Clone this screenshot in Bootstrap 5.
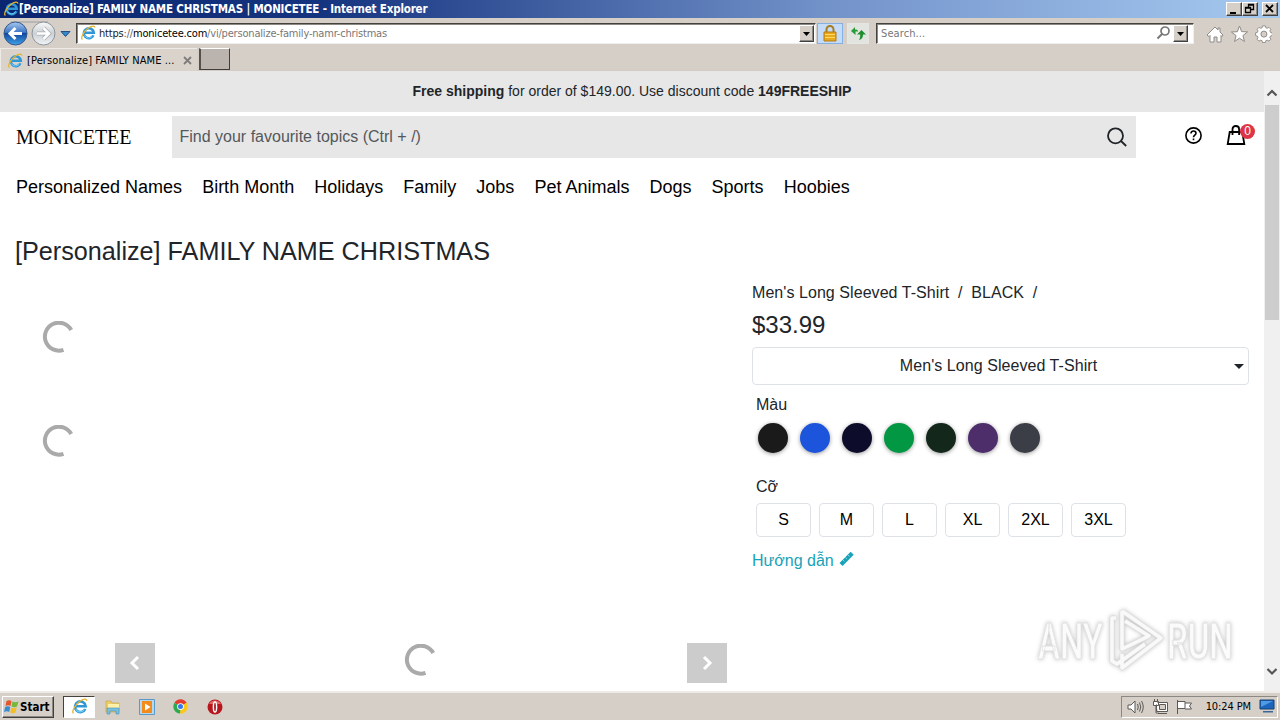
<!DOCTYPE html>
<html lang="vi">
<head>
    <meta charset="UTF-8">
    <meta name="viewport" content="width=device-width, initial-scale=1.0">
    <title>[Personalize] FAMILY NAME CHRISTMAS | MONICETEE</title>
    <link href="https://cdn.jsdelivr.net/npm/bootstrap@5.3.3/dist/css/bootstrap.min.css" rel="stylesheet">
    <style>
        body { width: 1280px; height: 720px; overflow: hidden; font-family: "Liberation Sans", Arial, sans-serif; color: #212529; }
        svg { display: block; flex: none; }

        /* browser window */
        .chrome-ui { font-family: "DejaVu Sans Condensed", "DejaVu Sans", sans-serif; font-size: 11px; line-height: 14px; color: #000; white-space: nowrap; background: #d5cfc8; }
        .title-bar { height: 18px; padding: 0 2px 0 3px; background: linear-gradient(90deg, #0b2670 0%, #15347f 25%, #7191c9 64%, #a6caf0 100%); }
        .title-text { color: #fff; font-weight: bold; font-size: 11.5px; letter-spacing: -.18px; }
        .win-btn, .drop-btn { background: #d5cfc8; border: 1px solid; border-color: #fff #404040 #404040 #fff; box-shadow: inset -1px -1px #8c8883; }
        .win-btn { width: 16px; height: 14px; }
        .tool-row { height: 30px; padding-left: 1px; }
        .sunken { background: #fff; border: 1px solid; border-color: #45413d #eee #eee #45413d; box-shadow: inset 1px 1px #8c8883; }
        .address { width: 740px; height: 21px; margin-left: 5px; padding: 1px 1px 1px 3px; }
        .url-text { letter-spacing: -.19px; padding-top: 2px; }
        .drop-btn { width: 15px; height: 17px; }
        .tool-btn { border: 1px solid #e5e5e3; background: #e2e4df; width: 22px; height: 21px; }
        .lock-btn { width: 26px; border-color: #85b0e4; background: #c5dcf8; }
        .search-ie { width: 318px; height: 21px; margin-left: 7px; padding: 1px 5px 1px 4px; color: #777; }
        .tab-row { height: 23px; border-bottom: 1px solid #d4cbc5; }
        .tab-item { width: 197px; height: 23px; padding: 1px 5px 0 6px; border-top: 1px solid #eeeae6; border-left: 1px solid #eeeae6; background: #d9d3cc; }
        .new-tab { width: 31px; height: 22px; margin-left: 2px; background: #bbb3ae; border: 1px solid; border-color: #fff #403c39 #403c39 #fff; border-left: 2px solid #55504b; }

        /* page viewport */
        .viewport-area { height: 620px; background: #fff; }
        .page-area { width: 1264px; }
        .promo { height: 41px; background: #e7e7e7; font-size: 14px; line-height: 41px; }
        .shop-head { height: 50px; padding: 4px 0 0 16px; color: #000; }
        .brand-name { width: 156px; font: 20px/42px "Liberation Serif", "Times New Roman", serif; }
        .topic-search { width: 964px; height: 42px; background: #e7e7e7; padding: 0 9px 0 7.5px; color: #54585c; }
        .cart { margin-left: 24px; width: 30px; }
        .cart-count { position: absolute; left: 14px; top: -1px; width: 15px; height: 15px; border-radius: 50%; background: #dc3545; color: #fff; font-size: 12px; line-height: 15px; text-align: center; }
        .topic-nav { height: 50px; padding: 0 16px; gap: 20.05px; font-size: 18px; color: #000; white-space: nowrap; }
        .product-title { font-size: 25.2px; line-height: 32px; font-weight: 400; margin: 23px 0 0 15px; }
        .gallery { width: 737px; height: 415px; margin-top: 9px; }
        .thumb-list { width: 115px; padding: 45px 0 0 42px; gap: 72px; }
        .main-shot { width: 612px; height: 407px; }
        .slide-btn { width: 40px; height: 40px; background: #ccc; }
        .options { width: 512px; padding: 14px 0 0 15px; }
        .style-name { letter-spacing: .06px; }
        .style-name i { font-style: normal; margin: 0 8.7px; }
        .price { font-size: 24px; line-height: 30px; margin-top: 5px; }
        .style-select { width: 497px; height: 38px; margin-top: 7px; border: 1px solid #dee2e6; border-radius: 4px; padding: 0 4px 0 10px; background: #fff; }
        .caret { border: 5px solid transparent; border-top-color: #212529; border-bottom: 0; }
        .swatch { width: 30px; height: 30px; border-radius: 50%; box-shadow: 0 1px 4px rgba(0, 0, 0, .4); }
        .size-btn { width: 55px; height: 34px; border: 1px solid #dee2e6; border-radius: 4px; color: #000; background: #fff; line-height: 32px; padding: 0; text-align: center; }
        .guide { color: #17a2b8; line-height: 24px; margin-top: 12px; }
        .scroll-col { width: 16px; background: #f0f0f0; padding: 17px 1px 15px; }
        .scroll-thumb { width: 14px; height: 215px; background: #cdcdcd; }
        .watermark { position: absolute; left: 1030px; top: 600px; }

        /* taskbar */
        .task-bar { height: 29px; border-top: 2px solid #eeebe7; padding: 2px 2px 2px 2px; }
        .start-btn { width: 52px; height: 22px; border: 1px solid; border-color: #fff #404040 #404040 #fff; box-shadow: inset -1px -1px #8c8883; font-weight: bold; font-size: 11.5px; padding-left: 1px; }
        .active-task { width: 32px; height: 22px; margin-left: 9px; background: #fff; border: 1px solid; border-color: #45413d #fff #fff #45413d; }
        .tray { width: 157px; height: 22px; border: 1px solid; border-color: #8c8883 #fff #fff #8c8883; padding: 0 2px 0 5px; font-size: 11px; }
    </style>
</head>
<body>
    <!-- shared icons -->
    <svg width="0" height="0" class="position-absolute">
        <symbol id="ie" viewBox="0 0 16 16">
            <path d="M13.400 10.300a5 5 0 1 1 .4-2.500H5" fill="none" stroke="#2f97d8" stroke-width="2.500"/>
            <path d="M12.500 10.800a4.600 4.600 0 0 1-8-.2" fill="none" stroke="#75cdf2" stroke-width="1"/>
            <path d="M2.400 14.500C.1 13 4.200 5.700 8.700 2.800c3.100-2.100 6.300-2.500 6-.1" fill="none" stroke="#e6b52d" stroke-width="1.300"/>
        </symbol>
        <symbol id="ring" viewBox="0 0 32 32">
            <path d="M29.200 9A14 14 0 1 0 21.500 28.900" fill="none" stroke="#aaa" stroke-width="4"/>
        </symbol>
    </svg>

    <div class="chrome-ui">
        <div class="title-bar d-flex align-items-center">
            <svg width="16" height="16"><use href="#ie"/></svg>
            <span class="title-text me-auto">[Personalize] FAMILY NAME CHRISTMAS | MONICETEE - Internet Explorer</span>
            <div class="win-btn"><svg width="14" height="12"><path d="M3 9h6v2H3z"/></svg></div>
            <div class="win-btn"><svg width="14" height="12"><path d="M5.500 4V1.500h5v5H8M2.500 4.500h5v5h-5zM5 2h6M2 5h6" fill="none" stroke="#000" stroke-width="1.300"/></svg></div>
            <div class="win-btn ms-1"><svg width="14" height="12"><path d="M3 2l7 7M10 2l-7 7" stroke="#000" stroke-width="1.800"/></svg></div>
        </div>
        <div class="tool-row d-flex align-items-center">
            <svg width="70" height="30" viewBox="0 0 70 30">
                <defs>
                    <linearGradient id="backFill" x2="0" y2="1"><stop stop-color="#a9c9ee"/><stop offset=".45" stop-color="#3c76c5"/><stop offset=".5" stop-color="#11489f"/><stop offset="1" stop-color="#42a2e8"/></linearGradient>
                    <linearGradient id="fwdFill" x2="0" y2="1"><stop stop-color="#fafafa"/><stop offset=".5" stop-color="#ccd0d5"/><stop offset="1" stop-color="#f1f4f7"/></linearGradient>
                </defs>
                <path d="M10 4h37" stroke="#9b9fa5"/>
                <circle cx="14.500" cy="15.500" r="11.500" fill="url(#backFill)" stroke="#35588c"/>
                <circle cx="42.500" cy="15.500" r="11.500" fill="url(#fwdFill)" stroke="#8b949c"/>
                <path d="M21 15.500H9m5.500-5.500L9 15.500l5.500 5.500" fill="none" stroke="#fff" stroke-width="3"/>
                <path d="M36 15.500h12m-5.500-5.500l5.500 5.500-5.500 5.500" fill="none" stroke="#a8adb2" stroke-width="4"/>
                <path d="M36 15.500h12m-5.500-5.500l5.500 5.500-5.500 5.500" fill="none" stroke="#fff" stroke-width="2.500"/>
                <path d="M60 13.500h9l-4.500 5z" fill="#338ac8" stroke="#24508a"/>
            </svg>
            <div class="address sunken d-flex align-items-center">
                <svg width="16" height="16"><use href="#ie"/></svg>
                <span class="url-text me-auto" style="margin-left:3px"><span style="color:#222">https</span><span style="color:#666">://</span>monicetee.com<span style="color:#777">/vi/personalize-family-namr-christmas</span></span>
                <div class="drop-btn"><svg width="13" height="15"><path d="M3 6h7l-3.500 4z"/></svg></div>
            </div>
            <div class="tool-btn lock-btn d-flex justify-content-center align-items-center" style="margin-left:1px">
                <svg width="14" height="17" viewBox="0 0 14 17"><path d="M3.500 8V4.500a3.500 3.500 0 0 1 7 0V8" fill="none" stroke="#a87c22" stroke-width="2"/><path d="M1 7h12v9H1z" fill="#e8a91c" stroke="#b47a10"/><path d="M2 9.500h10M2 12.500h10" stroke="#ffd866"/></svg>
            </div>
            <div class="tool-btn d-flex justify-content-center align-items-center" style="margin-left:4px">
                <svg width="16" height="16" viewBox="0 0 16 16"><path d="M1 6L5 2v2.500c2 0 3 .5 3 2H5.500v3.500z" fill="#299c39"/><path d="M7 9.500L11.500 5 16 9.500h-3c0 3-1 4.500-4 5.500 1-1.500 1.300-3 1.200-5.500z" fill="#1d8e2e"/></svg>
            </div>
            <div class="search-ie sunken d-flex align-items-center">
                <span class="me-auto" style="padding-top:2px;letter-spacing:.1px">Search...</span>
                <svg width="15" height="16" viewBox="0 0 15 16"><circle cx="9" cy="6" r="4" fill="none" stroke="#777" stroke-width="1.700"/><path d="M6 9l-4.500 4.500" stroke="#777" stroke-width="2"/></svg>
                <div class="drop-btn" style="margin-left:2px"><svg width="13" height="15"><path d="M3 6h7l-3.500 4z"/></svg></div>
            </div>
            <svg class="ms-auto me-2" width="66" height="20" viewBox="0 0 66 20" fill="#fff" stroke="#908b87">
                <g transform="translate(0 1)">
                    <path d="M1 11l8-8 3 3V4h2v4l3 3-1 1.500-1-1V18h-4v-5H8v5H4v-6.500l-1 1z"/>
                    <path d="M33.500 2l2.100 5.600 6 .3-4.700 3.700 1.600 5.900-5-3.300-5 3.300 1.600-5.900L25.400 8l6-.3z"/>
                    <path d="M56.500 2h3l.5 2 1.500.6 1.900-1 2 2-1 1.900.6 1.500 2 .5v3l-2 .5-.6 1.500 1 1.900-2 2-1.900-1-1.500.6-.5 2h-3l-.5-2-1.500-.6-1.900 1-2-2 1-1.900-.6-1.500-2-.5v-3l2-.5.6-1.500-1-1.900 2-2 1.900 1L56 4z" transform="translate(4 0) scale(.93)"/>
                    <circle cx="57.900" cy="10.100" r="3" fill="#d5cfc8"/>
                </g>
            </svg>
        </div>
        <div class="tab-row d-flex">
            <div class="tab-item d-flex align-items-center">
                <svg width="16" height="16"><use href="#ie"/></svg>
                <span class="me-auto" style="margin-left:4px;letter-spacing:.1px">[Personalize] FAMILY NAME ...</span>
                <svg width="9" height="9"><path d="M1 1l7 7M8 1L1 8" stroke="#817c79" stroke-width="1.800"/></svg>
            </div>
            <div class="new-tab"></div>
        </div>
    </div>

    <div class="viewport-area d-flex">
        <main class="page-area">
            <div class="promo text-center"><b>Free shipping</b> for order of $149.00. Use discount code <b>149FREESHIP</b></div>
            <header class="shop-head d-flex">
                <div class="brand-name">MONICETEE</div>
                <div class="topic-search d-flex align-items-center justify-content-between">
                    <span>Find your favourite topics (Ctrl + /)</span>
                    <svg width="20" height="20" viewBox="0 0 20 20" fill="none" stroke="#212529" stroke-width="1.800"><circle cx="8.500" cy="8.800" r="7.500"/><path d="M14 14l5.200 5"/></svg>
                </div>
                <svg style="margin:11px 0 0 49px" width="17" height="17" viewBox="0 0 17 17" fill="none" stroke="#000" stroke-width="1.600"><circle cx="8.500" cy="8.500" r="7.600"/><path d="M6 6.500C6 3 11 3.300 11 6.300c0 1.900-2.500 1.900-2.500 4"/><path d="M8.500 11.500v1.700"/></svg>
                <div class="cart position-relative" style="margin-top:9px">
                    <svg width="20" height="20" viewBox="0 0 20 20" fill="none" stroke="#000" stroke-width="1.800"><path d="M3.700 7h12.600l2 12H1.700z"/><path d="M6.500 10V4.200Q6.500 1 9.800 1t3.300 3.200V10" stroke-width="1.800"/></svg>
                    <span class="cart-count">0</span>
                </div>
            </header>
            <nav class="topic-nav d-flex align-items-center">
                <span>Personalized Names</span><span>Birth Month</span><span>Holidays</span><span>Family</span><span>Jobs</span><span>Pet Animals</span><span>Dogs</span><span>Sports</span><span>Hoobies</span>
            </nav>
            <h1 class="product-title">[Personalize] FAMILY NAME CHRISTMAS</h1>
            <div class="d-flex">
                <section class="gallery d-flex">
                    <div class="thumb-list d-flex flex-column">
                        <svg width="32" height="32"><use href="#ring"/></svg>
                        <svg width="32" height="32"><use href="#ring"/></svg>
                    </div>
                    <div class="main-shot d-flex justify-content-between align-items-end">
                        <div class="slide-btn d-flex align-items-center justify-content-center"><svg width="14" height="16"><path d="M10 2L4 8l6 6" fill="none" stroke="#fff" stroke-width="3"/></svg></div>
                        <svg width="32" height="32" style="margin:0 2px 7px 0"><use href="#ring"/></svg>
                        <div class="slide-btn d-flex align-items-center justify-content-center"><svg width="14" height="16"><path d="M4 2l6 6-6 6" fill="none" stroke="#fff" stroke-width="3"/></svg></div>
                    </div>
                </section>
                <section class="options">
                    <div class="style-name">Men's Long Sleeved T-Shirt<i>/</i>BLACK<i>/</i></div>
                    <div class="price">$33.99</div>
                    <div class="style-select d-flex align-items-center">
                        <span class="flex-grow-1 text-center style-name">Men's Long Sleeved T-Shirt</span>
                        <span class="caret"></span>
                    </div>
                    <div class="ms-1" style="margin-top:8px">Màu</div>
                    <div class="d-flex" id="swatches" style="gap:12px;margin:6px 0 0 6px"></div>
                    <div class="ms-1" style="margin-top:22px">Cỡ</div>
                    <div class="d-flex gap-2 ms-1" style="margin-top:4px">
                        <button class="size-btn">S</button>
                        <button class="size-btn">M</button>
                        <button class="size-btn">L</button>
                        <button class="size-btn">XL</button>
                        <button class="size-btn">2XL</button>
                        <button class="size-btn">3XL</button>
                    </div>
                    <div class="guide d-flex">Hướng dẫn
                        <svg style="margin:2px 0 0 5px" width="16" height="16" viewBox="0 0 16 16"><path d="M.5 12L11.700.8l3 3L3.500 15z" fill="#17a2b8"/><path d="M4 9l1.500 1.500M6.500 6.500L8 8M9 4l1.500 1.500" stroke="#fff" stroke-width=".8" opacity=".6"/></svg>
                    </div>
                </section>
            </div>
        </main>
        <div class="scroll-col d-flex flex-column align-items-center">
            <svg width="12" height="9" class="mb-2"><path d="M1.500 7.500L6 3l4.500 4.500" fill="none" stroke="#555" stroke-width="2.200"/></svg>
            <div class="scroll-thumb"></div>
            <svg width="12" height="9" class="mt-auto"><path d="M1.500 2L6 6.500 10.500 2" fill="none" stroke="#555" stroke-width="2.200"/></svg>
        </div>
    </div>

    <!-- translucent recorder logo over the page -->
    <svg class="watermark" width="250" height="90" viewBox="0 0 250 90" style="filter:drop-shadow(0 0 2px rgba(0,0,0,.25))">
        <g fill="#fbfbfb" stroke="#e2e2e2" stroke-width=".8" font-family="Roboto, sans-serif" font-weight="500" font-size="50">
            <text transform="translate(8 59) scale(.66 1)">ANY</text>
            <text transform="translate(137 59) scale(.66 1)">RUN</text>
        </g>
        <g fill="none" stroke-linejoin="round">
            <path d="M92 11l39 27-39 30V54M92 11v38l27-13-24-15M86 18h-4v43l5 3 28-20" stroke="#dedede" stroke-width="5"/>
            <path d="M92 11l39 27-39 30V54M92 11v38l27-13-24-15M86 18h-4v43l5 3 28-20" stroke="#f9f9f9" stroke-width="3.500"/>
        </g>
    </svg>

    <div class="chrome-ui task-bar d-flex align-items-center">
        <div class="start-btn d-flex align-items-center">
            <svg width="16" height="16" viewBox="0 0 16 16"><path d="M2.500 2Q5 .5 7.500 2L6.500 7Q4 5.500 1.500 7z" fill="#e6552c"/><path d="M8.500 2.500q3 1.500 6 0l-1.500 5q-2.500 1.500-5.500 0z" fill="#75b83b"/><path d="M1.200 8q2.500-1.500 5 0l-1 5Q2.700 11.500 0 13z" fill="#388bd1"/><path d="M7.200 8.500q2.500 1.500 5.500 0l-1.200 5q-2.800 1.500-5.300 0z" fill="#f4bd25"/></svg>
            <span>Start</span>
        </div>
        <div class="active-task d-flex align-items-center justify-content-center"><svg width="17" height="17"><use href="#ie"/></svg></div>
        <svg style="margin-left:10px" width="16" height="16" viewBox="0 0 16 16"><path d="M1 2h5l1 2h7v9H1z" fill="#edcc68" stroke="#c4a34c" stroke-width=".6"/><path d="M3 5h11v4H3z" fill="#fff1a8"/><path d="M2 15V9h12v6h-3v-3H5v3z" fill="#78bfe0" stroke="#438eb8" stroke-width=".6"/></svg>
        <svg style="margin-left:18px" width="16" height="16" viewBox="0 0 16 16"><path d="M.5.500h15v15H.500z" fill="#b5d7f0" stroke="#5a9ac9"/><path d="M3 2h10v12H3z" fill="#f38b1c"/><path d="M6 4.500v7L11.500 8z" fill="#fff"/></svg>
        <svg style="margin-left:18px" width="15" height="15" viewBox="0 0 16 16"><path d="M8 8L1.500 4a7.500 7.500 0 0 1 13 0z" fill="#e33b2e"/><path d="M8 8l6.500-4A7.500 7.500 0 0 1 7.500 15.500z" fill="#fbc916"/><path d="M8 8l-.5 7.500A7.500 7.500 0 0 1 1.500 4z" fill="#2da94f"/><circle cx="8" cy="8" r="3.600" fill="#fff"/><circle cx="8" cy="8" r="2.700" fill="#3b78e7"/></svg>
        <svg style="margin-left:19px" width="16" height="16" viewBox="0 0 16 16"><circle cx="8" cy="8" r="7.500" fill="#b9151c"/><path d="M2 5a7 7 0 0 1 12 0z" fill="#e46a6a"/><ellipse cx="8" cy="8" rx="1.600" ry="5" fill="#9c0d13" stroke="#fff" stroke-width="1.500"/></svg>
        <div class="tray ms-auto d-flex align-items-center">
            <svg width="66" height="18" viewBox="0 0 66 18" fill="#fff" stroke="#5d5955">
                <path d="M1 7h3l4-4v12l-4-4H1z"/><path d="M10.500 6q1.500 3 0 6M12.500 4.500q2.500 4.500 0 9M14.500 3q3.500 6 0 12" fill="none"/>
                <path d="M30.500 4.500h10v9h-11v-7M31 15.500h9M26.500 3.500h5v4h-5zM27.500 1v2M30.500 1v2M29 8v7h3"/>
                <path d="M32.500 6.500h6v5h-6z" fill="#d5cfc8"/>
                <path d="M50.500 2v14M51 3.500h7v7h-7M58 5h6.500l-2 3 2 3H58"/>
            </svg>
            <span class="ms-auto" style="letter-spacing:-.1px">10:24 PM</span>
            <svg style="margin-left:8px" width="16" height="15" viewBox="0 0 16 15"><path d="M1 1h14v9H1z" fill="#1d64bd" stroke="#174072"/><path d="M2 2h12L2 8z" fill="#4c9be4"/><path d="M4 12h10v1.500H4z" fill="#3a6596"/></svg>
        </div>
    </div>

    <script src="https://cdn.jsdelivr.net/npm/bootstrap@5.3.3/dist/js/bootstrap.bundle.min.js"></script>
    <script>
        // available shirt colours
        let colours = ["#1a1a1a", "#1c54db", "#0d0d2b", "#029743", "#13281a", "#4e2d6b", "#3b3e46"];
        let swatches = document.getElementById("swatches");
        for (let i = 0; i < colours.length; i++) {
            let s = document.createElement("span");
            s.className = "swatch";
            s.style.backgroundColor = colours[i];
            swatches.appendChild(s);
        }
    </script>
</body>
</html>
